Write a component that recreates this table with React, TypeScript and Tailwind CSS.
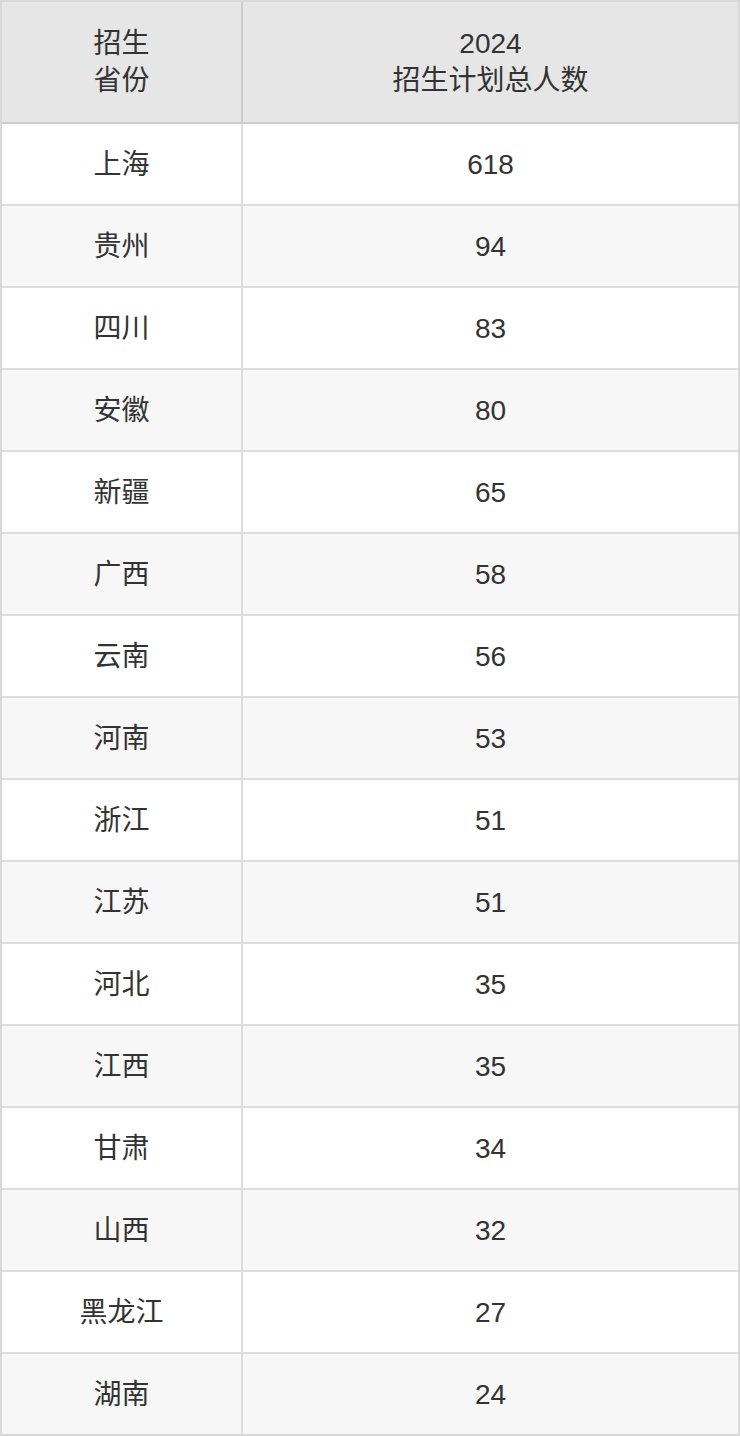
import React from "react";

const rows: [string, string][] = [
  ["上海", "618"],
  ["贵州", "94"],
  ["四川", "83"],
  ["安徽", "80"],
  ["新疆", "65"],
  ["广西", "58"],
  ["云南", "56"],
  ["河南", "53"],
  ["浙江", "51"],
  ["江苏", "51"],
  ["河北", "35"],
  ["江西", "35"],
  ["甘肃", "34"],
  ["山西", "32"],
  ["黑龙江", "27"],
  ["湖南", "24"],
];

export default function App() {
  return (
    <div
      className="w-[740px] bg-white text-[#333] text-[28px] leading-[37px]"
      style={{ fontFamily: '"Liberation Sans", Arial, "Noto Sans CJK SC", sans-serif' }}
    >
      <div className="border-2 border-[#d9d9d9]">
        <div className="grid grid-cols-[239px_2px_1fr] h-[120px] bg-[#e6e6e6]">
          <div className="flex flex-col items-center justify-center text-center">
            <span>招生</span>
            <span>省份</span>
          </div>
          <div className="bg-[#cccccc]" />
          <div className="flex flex-col items-center justify-center text-center">
            <span>2024</span>
            <span>招生计划总人数</span>
          </div>
        </div>
        <div className="h-[2px] bg-[#cccccc]" />
        {rows.map(([p, n], i) => (
          <div key={i}>
            <div
              className={
                "grid grid-cols-[239px_2px_1fr] h-[80px] " +
                (i % 2 === 1 ? "bg-[#f7f7f7]" : "bg-white")
              }
            >
              <div className="flex items-center justify-center">{p}</div>
              <div className="bg-[#dddddd]" />
              <div className="flex items-center justify-center">{n}</div>
            </div>
            {i < rows.length - 1 && <div className="h-[2px] bg-[#dddddd]" />}
          </div>
        ))}
      </div>
    </div>
  );
}
